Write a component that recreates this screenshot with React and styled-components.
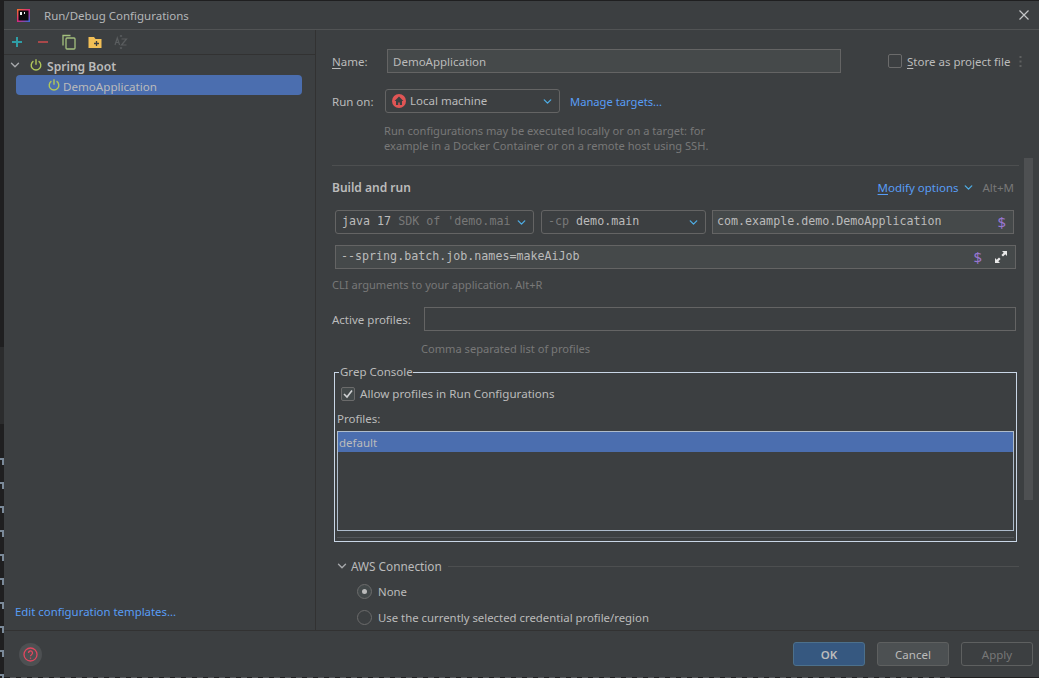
import { createGlobalStyle, styled } from "styled-components";
import { ChevronDown } from "lucide-react";

const GlobalStyle = createGlobalStyle`
  html, body {
    margin: 0;
    padding: 0;
    background: #1f1f20;
  }
  * { box-sizing: border-box; }
  body {
    font-family: "Noto Sans", "Liberation Sans", sans-serif;
    font-size: 11.5px;
    color: #bbbbbb;
  }
`;

const Screen = styled.div`
  display: flex;
  width: 1039px;
  height: 678px;
  padding-top: 1px;
  padding-bottom: 1px;
  overflow: hidden;
  background:
    repeating-linear-gradient(to right, #55575a 0 6px, transparent 6px 11px) 10px 100% / 940px 1px no-repeat,
    #1f1f20;
`;

const EditorStrip = styled.div`
  width: 4px;
  flex: none;
  margin-bottom: -1px;
  background:
    repeating-linear-gradient(to bottom, #7b8a99 0 2px, transparent 2px 24px) 0 457px / 4px 100% no-repeat,
    repeating-linear-gradient(to bottom, #7b8a99 0 7px, transparent 7px 24px) 2px 457px / 2px 100% no-repeat,
    linear-gradient(#2b2c2d, #2b2c2d) 0 346px / 4px 77px no-repeat,
    #1f1f20;
`;

const Dialog = styled.div`
  flex: 1;
  min-width: 0;
  display: flex;
  flex-direction: column;
  background: #3c3f41;
`;

const TitleBar = styled.div`
  height: 29px;
  flex: none;
  display: flex;
  align-items: center;
  padding: 0 10px 0 13px;
  border-bottom: 1px solid #515354;
`;

const Title = styled.span`
  margin-left: 14px;
  font-size: 11.5px;
  color: #b4b6b8;
  flex: 1;
`;

const Body = styled.div`
  flex: 1;
  min-height: 0;
  display: flex;
`;

const LeftPanel = styled.div`
  width: 312px;
  flex: none;
  display: flex;
  flex-direction: column;
  border-right: 1px solid #323232;
`;

const Toolbar = styled.div`
  height: 25px;
  flex: none;
  display: flex;
  align-items: center;
  gap: 10px;
  padding-left: 5px;
  border-bottom: 1px solid #323232;
`;

const ToolIcon = styled.svg`
  width: 16px;
  height: 16px;
  flex: none;
`;

const Tree = styled.div`
  flex: 1;
  padding: 0 13px 0 12px;
`;

const GroupRow = styled.div`
  height: 20px;
  display: flex;
  align-items: center;
  font-weight: 600;
  font-size: 12.1px;
  color: #bbbbbb;
`;

const TreeChevron = styled(ChevronDown)`
  width: 14px;
  height: 14px;
  margin-left: -8px;
  margin-right: 7px;
  color: #a7a9ab;
`;

const TreeLabel = styled.span`
  margin-left: ${(p) => p.$left}px;
  padding-top: 2px;
`;

const ConfigRow = styled.div`
  height: 20px;
  display: flex;
  align-items: center;
  padding-left: 31px;
  background: #4b6eaf;
  border-radius: 4px;
  font-size: 11.6px;
  color: #bbbbbb;
`;

const TemplatesLink = styled.a`
  display: block;
  padding: 0 0 11px 11px;
  color: #589df6;
  font-size: 11.4px;
`;

const RightPanel = styled.div`
  flex: 1;
  min-width: 0;
  display: flex;
`;

const Form = styled.div`
  width: 708px;
  padding: 19px 0 0 16px;
  overflow: hidden;
`;

const Row = styled.div`
  display: flex;
  align-items: center;
  margin-top: ${(p) => p.$top || 0}px;
  padding-right: ${(p) => p.$right || 0}px;
`;

const Label = styled.span`
  width: ${(p) => p.$width || 55}px;
  flex: none;
  color: #bbbbbb;
`;

const Mnemonic = styled.span`
  text-decoration: underline;
  text-underline-offset: 2px;
`;

const TextField = styled.div`
  width: ${(p) => p.$width}px;
  height: 24px;
  flex: ${(p) => (p.$width ? "none" : "1")};
  display: flex;
  align-items: center;
  padding: 0 ${(p) => p.$endPad || 5}px 0 ${(p) => p.$startPad || 5}px;
  margin-left: ${(p) => p.$left || 0}px;
  background: ${(p) => (p.$empty ? "#3c3f41" : "#45494a")};
  border: 1px solid #646464;
  color: #bbbbbb;
`;

const Spacer = styled.span`
  flex: 1;
`;

const Checkbox = styled.span`
  width: 14px;
  height: 14px;
  flex: none;
  display: inline-flex;
  align-items: center;
  justify-content: center;
  border-radius: 2px;
  border: 1px solid #6b6b6b;
  background: ${(p) => (p.$checked ? "#43494a" : "#3c3f41")};
`;

const StoreLabel = styled.label`
  display: flex;
  align-items: center;
  gap: 5px;
  margin-left: 47px;
  color: #bbbbbb;
`;

const MoreDots = styled.svg`
  width: 3px;
  height: 11px;
  margin-left: 9px;
  fill: #5e6060;
`;

const Combo = styled.div`
  width: ${(p) => p.$width}px;
  height: 24px;
  flex: none;
  display: flex;
  align-items: center;
  justify-content: space-between;
  padding: 0 5px 0 6px;
  margin-left: ${(p) => p.$left || 0}px;
  margin-right: ${(p) => p.$gap || 0}px;
  border: 1px solid #646464;
  border-radius: 3px;
  background: #3c3f41;
`;

const ComboValue = styled.span`
  display: flex;
  align-items: center;
  gap: 4px;
  padding-bottom: 1px;
`;

const ComboChevron = styled(ChevronDown)`
  width: 13px;
  height: 13px;
  flex: none;
  color: #4eade5;
  stroke-width: 2.4;
  margin-left: ${(p) => p.$left || 0}px;
`;

const Link = styled.a`
  color: #589df6;
  font-size: ${(p) => p.$size || 11.5}px;
  margin-left: ${(p) => p.$left || 0}px;
`;

const Hint = styled.div`
  color: #787878;
  font-size: 11.1px;
  line-height: 15px;
  margin-top: ${(p) => p.$top || 0}px;
  margin-left: ${(p) => p.$left || 0}px;
`;

const Divider = styled.div`
  height: 1px;
  background: #4d4f50;
  margin: 12px 5px 0 0;
`;

const SectionTitle = styled.span`
  font-size: 12px;
  font-weight: 600;
  color: #bbbbbb;
`;

const Mono = styled.span`
  font-family: "DejaVu Sans Mono", "Liberation Mono", monospace;
  font-size: 11.67px;
  white-space: nowrap;
  overflow: hidden;
  padding-bottom: 2px;
  color: ${(p) => (p.$muted ? "#787878" : "#bbbbbb")};
`;

const Shortcut = styled.span`
  color: #787878;
  margin-left: 8px;
`;

const Dollar = styled.span`
  color: #9876d1;
  font-size: 15px;
  font-weight: 400;
  margin-right: ${(p) => p.$right || 0}px;
`;

const GroupBox = styled.fieldset`
  margin: 8px 0 0 2px;
  padding: 0 2px 0 2px;
  height: 178px;
  width: 683px;
  border: 1px solid #c9d6e6;
  min-width: 0;
`;

const Legend = styled.legend`
  padding: 0 0 0 1px;
  margin-left: 2px;
  height: 16px;
  line-height: 16px;
  color: #bbbbbb;
`;

const AllowRow = styled.label`
  display: flex;
  align-items: center;
  gap: 5px;
  margin: 6px 0 0 4px;
  font-size: 11.6px;
`;

const ProfilesLabel = styled.div`
  margin: 10px 0 4px 0;
  line-height: 16px;
`;

const ProfileList = styled.div`
  height: 100px;
  border: 1px solid #aebccc;
`;

const ProfileItem = styled.div`
  height: 20px;
  line-height: 21px;
  padding-left: 1px;
  background: #4b6eaf;
  color: #bbbbbb;
`;

const ListFoot = styled.div`
  height: 1px;
  margin-top: 6px;
  background: #53565a;
`;

const CollapseHeader = styled.div`
  display: flex;
  align-items: center;
  margin: 14px 5px 0 3px;
  height: 20px;
  font-size: 11.8px;
`;

const CollapseChevron = styled(ChevronDown)`
  width: 14px;
  height: 14px;
  margin-right: 2px;
  color: #a7a9ab;
  stroke-width: 2.4;
`;

const HeaderLine = styled.span`
  flex: 1;
  height: 1px;
  margin-left: 6px;
  background: #4d4f50;
`;

const RadioRow = styled.label`
  display: flex;
  align-items: center;
  gap: 6px;
  margin: ${(p) => p.$top}px 0 0 25px;
  height: 16px;
  font-size: 11.37px;
`;

const Radio = styled.span`
  width: 15px;
  height: 15px;
  flex: none;
  display: inline-flex;
  align-items: center;
  justify-content: center;
  border-radius: 50%;
  border: 1px solid #6b6b6b;
  background: ${(p) => (p.$on ? "#43494a" : "#3c3f41")};

  &::after {
    content: "";
    display: ${(p) => (p.$on ? "block" : "none")};
    width: 5px;
    height: 5px;
    border-radius: 50%;
    background: #bbbbbb;
  }
`;

const ScrollTrack = styled.div`
  width: 9px;
  flex: none;
  padding-top: 128px;
`;

const ScrollThumb = styled.div`
  height: 342px;
  background: #4e5052;
`;

const Footer = styled.div`
  height: 47px;
  flex: none;
  display: flex;
  align-items: center;
  padding: 0 6px 0 15px;
  border-top: 1px solid #323232;
`;

const HelpButton = styled.button`
  width: 23px;
  height: 23px;
  padding: 0;
  display: flex;
  align-items: center;
  justify-content: center;
  border-radius: 50%;
  border: none;
  background: #4d5052;
`;

const DialogButton = styled.button`
  width: 72px;
  height: 24px;
  margin-left: 12px;
  border-radius: 3px;
  font: inherit;
  font-weight: ${(p) => (p.$primary ? 600 : 400)};
  color: ${(p) => (p.$disabled ? "#777777" : "#bbbbbb")};
  border: 1px solid ${(p) => (p.$primary ? "#4c708c" : "#5e6060")};
  background: ${(p) => (p.$primary ? "#365880" : p.$disabled ? "#3c3f41" : "#4c5052")};
`;

const PowerSvg = styled.svg`
  flex: none;
`;

function PowerIcon() {
  return (
    <PowerSvg width="14" height="14" viewBox="0 0 14 14" fill="none" stroke="#b0c75a" strokeWidth="1.4">
      <path d="M7 1.2v5.6" />
      <path d="M4.4 3.2a4.8 4.8 0 1 0 5.2 0" />
    </PowerSvg>
  );
}

function IdeaLogo() {
  return (
    <svg width="13" height="13" viewBox="0 0 13 13">
      <defs>
        <linearGradient id="ideaEdge" x1="0" y1="0" x2="1" y2="1">
          <stop offset="0" stopColor="#f5732a" />
          <stop offset="0.5" stopColor="#d6297f" />
          <stop offset="1" stopColor="#2a6fe0" />
        </linearGradient>
      </defs>
      <rect width="13" height="13" fill="url(#ideaEdge)" />
      <rect x="1.5" y="1.5" width="10" height="10" fill="#0b0b0e" />
      <rect x="3" y="3" width="2" height="3" fill="#f0f0f0" />
      <rect x="7" y="3" width="1" height="2" fill="#f0f0f0" />
    </svg>
  );
}

function ExpandIcon() {
  return (
    <svg width="14" height="14" viewBox="0 0 14 14" fill="none">
      <path d="M8 1h5v5l-1.7-1.7L9 6.6 7.4 5l2.3-2.3z" fill="#e8e8e8" />
      <path d="M1 13V8l1.7 1.7L5 7.4 6.6 9l-2.3 2.3L6 13z" fill="#e8e8e8" />
    </svg>
  );
}

function App() {
  return (
    <>
      <GlobalStyle />
      <Screen>
        <EditorStrip />
        <Dialog>
          <TitleBar>
            <IdeaLogo />
            <Title>Run/Debug Configurations</Title>
            <svg width="10" height="10" viewBox="0 0 10 10" stroke="#c4c6c8" strokeWidth="1.2">
              <path d="M0.5 0.5l9 9M9.5 0.5l-9 9" />
            </svg>
          </TitleBar>
          <Body>
            <LeftPanel>
              <Toolbar>
                <ToolIcon viewBox="0 0 16 16" stroke="#2f9ea6" strokeWidth="2" fill="none">
                  <path d="M8 3v10M3 8h10" />
                </ToolIcon>
                <ToolIcon viewBox="0 0 16 16" stroke="#a8484a" strokeWidth="2" fill="none">
                  <path d="M3 8h10" />
                </ToolIcon>
                <ToolIcon viewBox="0 0 16 16" stroke="#a3c07d" strokeWidth="1.3" fill="none">
                  <path d="M9.5 1.5H2v10" />
                  <rect x="5" y="4" width="9" height="11" rx="1" />
                </ToolIcon>
                <ToolIcon viewBox="0 0 16 16">
                  <path d="M1.5 3H7l1.5 2h6v9h-13z" fill="#f2bf56" />
                  <path d="M9.5 7v5M7 9.5h5" stroke="#3c3f41" strokeWidth="1.3" />
                </ToolIcon>
                <ToolIcon viewBox="0 0 16 16" fill="none" stroke="#5a5d5f" strokeWidth="1.2">
                  <path d="M2 11l2.3-7 2.3 7M3 8.5h2.6" />
                  <path d="M8.5 5h5l-5 6h5" />
                  <path d="M7 2.5l1-1 1 1M7 13.5l1 1 1-1" />
                </ToolIcon>
              </Toolbar>
              <Tree>
                <GroupRow>
                  <TreeChevron strokeWidth={2.4} />
                  <PowerIcon />
                  <TreeLabel $left={4}>Spring Boot</TreeLabel>
                </GroupRow>
                <ConfigRow>
                  <PowerIcon />
                  <TreeLabel $left={2}>DemoApplication</TreeLabel>
                </ConfigRow>
              </Tree>
              <TemplatesLink>Edit configuration templates...</TemplatesLink>
            </LeftPanel>
            <RightPanel>
              <Form>
                <Row>
                  <Label>
                    <Mnemonic>N</Mnemonic>ame:
                  </Label>
                  <TextField $width={454}>DemoApplication</TextField>
                  <StoreLabel>
                    <Checkbox />
                    <span>
                      <Mnemonic>S</Mnemonic>tore as project file
                    </span>
                  </StoreLabel>
                  <MoreDots viewBox="0 0 3 11">
                    <rect x="0.5" width="2" height="2" />
                    <rect x="0.5" y="4.5" width="2" height="2" />
                    <rect x="0.5" y="9" width="2" height="2" />
                  </MoreDots>
                </Row>
                <Row $top={16}>
                  <Label $width={53}>Run on:</Label>
                  <Combo $width={175}>
                    <ComboValue>
                      <svg width="14" height="14" viewBox="0 0 14 14">
                        <circle cx="7" cy="7" r="7" fill="#e05555" />
                        <path d="M7 2.6L2.6 7H4v4h2.2V8.4h1.6V11H10V7h1.4z" fill="#3c3f41" />
                      </svg>
                      Local machine
                    </ComboValue>
                    <ComboChevron />
                  </Combo>
                  <Link $left={10} $size={11.2}>
                    Manage targets...
                  </Link>
                </Row>
                <Hint $top={10} $left={52}>
                  Run configurations may be executed locally or on a target: for
                  <br />
                  example in a Docker Container or on a remote host using SSH.
                </Hint>
                <Divider />
                <Row $top={13} $right={10}>
                  <SectionTitle>Build and run</SectionTitle>
                  <Spacer />
                  <Link>
                    <Mnemonic>M</Mnemonic>odify options
                  </Link>
                  <ComboChevron $left={3} />
                  <Shortcut>Alt+M</Shortcut>
                </Row>
                <Row $top={14}>
                  <Combo $width={199} $gap={7} $left={3}>
                    <Mono>
                      java 17 <Mono $muted>SDK of 'demo.mai</Mono>
                    </Mono>
                    <ComboChevron />
                  </Combo>
                  <Combo $width={165} $gap={6}>
                    <Mono>
                      <Mono $muted>-cp</Mono> demo.main
                    </Mono>
                    <ComboChevron />
                  </Combo>
                  <TextField $width={302} $endPad={7} $startPad={4}>
                    <Mono>com.example.demo.DemoApplication</Mono>
                    <Spacer />
                    <Dollar>$</Dollar>
                  </TextField>
                </Row>
                <Row $top={11}>
                  <TextField $width={681} $endPad={7} $left={3}>
                    <Mono>--spring.batch.job.names=makeAiJob</Mono>
                    <Spacer />
                    <Dollar $right={12}>$</Dollar>
                    <ExpandIcon />
                  </TextField>
                </Row>
                <Hint $top={8}>CLI arguments to your application. Alt+R</Hint>
                <Row $top={15}>
                  <Label $width={92}>Active profiles:</Label>
                  <TextField $empty $width={592} />
                </Row>
                <Hint $top={10} $left={89}>
                  Comma separated list of profiles
                </Hint>
                <GroupBox>
                  <Legend>Grep Console</Legend>
                  <AllowRow>
                    <Checkbox $checked>
                      <svg width="10" height="10" viewBox="0 0 10 10" fill="none" stroke="#d0d2d4" strokeWidth="1.6">
                        <path d="M1 5l3 3 5-6.5" />
                      </svg>
                    </Checkbox>
                    Allow profiles in Run Configurations
                  </AllowRow>
                  <ProfilesLabel>Profiles:</ProfilesLabel>
                  <ProfileList>
                    <ProfileItem>default</ProfileItem>
                  </ProfileList>
                  <ListFoot />
                </GroupBox>
                <CollapseHeader>
                  <CollapseChevron />
                  AWS Connection
                  <HeaderLine />
                </CollapseHeader>
                <RadioRow $top={7}>
                  <Radio $on />
                  None
                </RadioRow>
                <RadioRow $top={10}>
                  <Radio />
                  Use the currently selected credential profile/region
                </RadioRow>
              </Form>
              <ScrollTrack>
                <ScrollThumb />
              </ScrollTrack>
            </RightPanel>
          </Body>
          <Footer>
            <HelpButton>
              <svg width="15" height="15" viewBox="0 0 15 15" fill="none" stroke="#e0475f" strokeWidth="1.3">
                <circle cx="7.5" cy="7.5" r="6.5" />
                <path d="M5.5 6a2 2 0 1 1 3 1.7c-.7.4-1 .8-1 1.6" />
                <path d="M7.5 10.6v1.2" />
              </svg>
            </HelpButton>
            <Spacer />
            <DialogButton $primary>OK</DialogButton>
            <DialogButton>Cancel</DialogButton>
            <DialogButton $disabled>Apply</DialogButton>
          </Footer>
        </Dialog>
      </Screen>
    </>
  );
}

export default App;
